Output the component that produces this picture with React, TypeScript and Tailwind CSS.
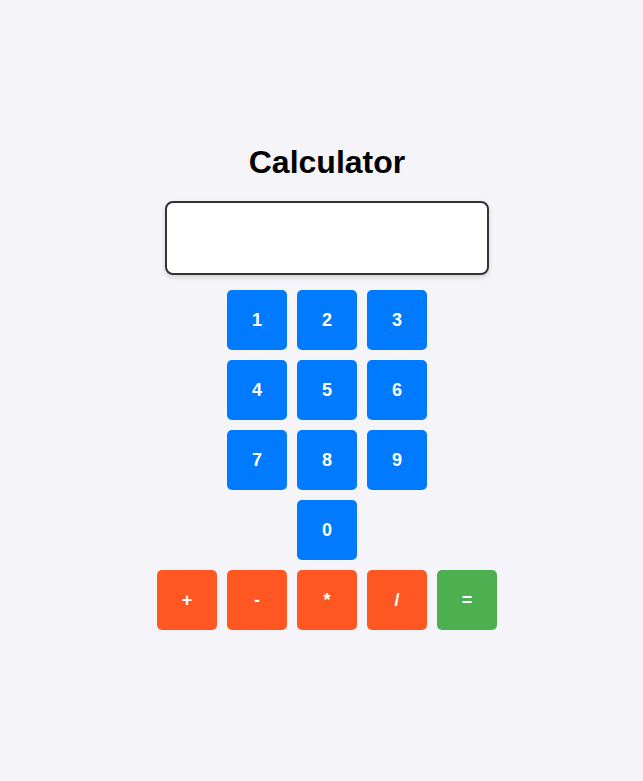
import React from 'react';

const rows = [
  ['1', '2', '3'],
  ['4', '5', '6'],
  ['7', '8', '9'],
  ['0'],
];

const ops = ['+', '-', '*', '/'];

const Key: React.FC<{ label: string; color: string }> = ({ label, color }) => (
  <button
    className={`${color} w-[60px] h-[60px] rounded-[5px] text-white text-[18px] font-bold flex items-center justify-center`}
  >
    {label}
  </button>
);

export default function App() {
  return (
    <div className="min-h-[781px] bg-[#f4f4f9] pl-[11px] pt-[144px] font-['Liberation_Sans',Arial,sans-serif]">
      <div className="flex flex-col items-center">
        <h1 className="text-[32px] leading-[37px] font-bold text-black">Calculator</h1>
        <div className="mt-[20px] w-[324px] h-[74px] bg-white border-2 border-[#333] rounded-[8px] shadow-[0_2px_5px_rgba(0,0,0,0.15)]" />

        <div className="mt-[15px] flex flex-col gap-[10px]">
          {rows.map((row, i) => (
            <div key={i} className="flex justify-center gap-[10px]">
              {row.map(n => (
                <Key key={n} label={n} color="bg-[#007bff]" />
              ))}
            </div>
          ))}
          <div className="flex justify-center gap-[10px]">
            {ops.map(o => (
              <Key key={o} label={o} color="bg-[#ff5722]" />
            ))}
            <Key label="=" color="bg-[#4caf50]" />
          </div>
        </div>
      </div>
    </div>
  );
}
